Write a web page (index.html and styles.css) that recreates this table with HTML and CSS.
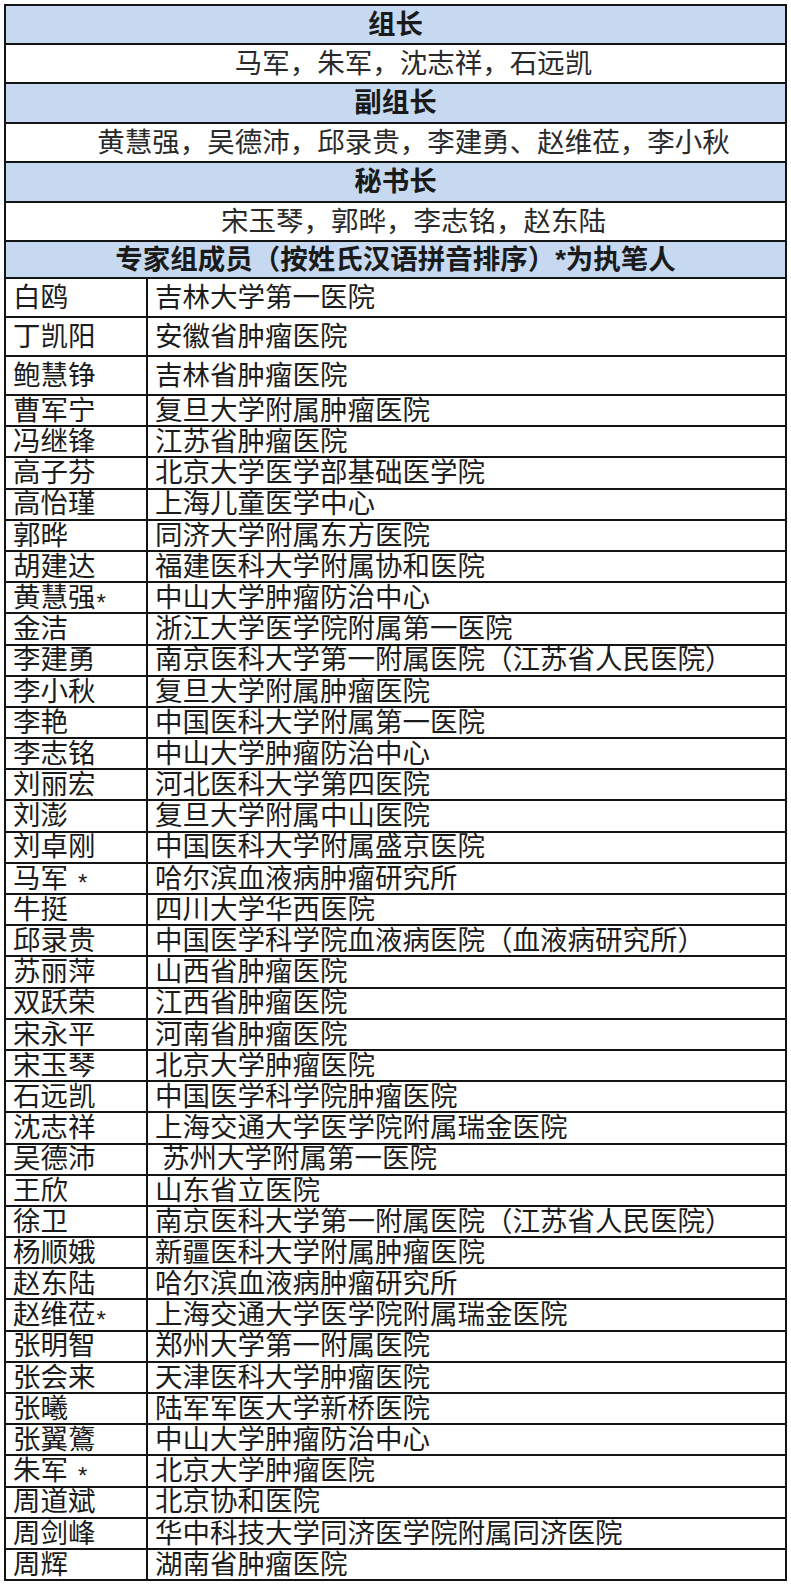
FILE: index.html
```html
<!DOCTYPE html>
<html lang="zh-CN">
<head>
<meta charset="utf-8">
<title>专家组</title>
<link rel="stylesheet" href="styles.css">
</head>
<body>
<div class="sheet">
  <div class="row head h1">组长</div>
  <div class="row names h2">马军，朱军，沈志祥，石远凯</div>
  <div class="row head h3">副组长</div>
  <div class="row names h4">黄慧强，吴德沛，邱录贵，李建勇、赵维莅，李小秋</div>
  <div class="row head h5">秘书长</div>
  <div class="row names h6">宋玉琴，郭晔，李志铭，赵东陆</div>
  <div class="row head h7">专家组成员（按姓氏汉语拼音排序）*为执笔人</div>
  <div class="row member tall"><div class="c1">白鸥</div><div class="c2">吉林大学第一医院</div></div>
  <div class="row member tall"><div class="c1">丁凯阳</div><div class="c2">安徽省肿瘤医院</div></div>
  <div class="row member tall"><div class="c1">鲍慧铮</div><div class="c2">吉林省肿瘤医院</div></div>
  <div class="row member"><div class="c1">曹军宁</div><div class="c2">复旦大学附属肿瘤医院</div></div>
  <div class="row member"><div class="c1">冯继锋</div><div class="c2">江苏省肿瘤医院</div></div>
  <div class="row member"><div class="c1">高子芬</div><div class="c2">北京大学医学部基础医学院</div></div>
  <div class="row member"><div class="c1">高怡瑾</div><div class="c2">上海儿童医学中心</div></div>
  <div class="row member"><div class="c1">郭晔</div><div class="c2">同济大学附属东方医院</div></div>
  <div class="row member"><div class="c1">胡建达</div><div class="c2">福建医科大学附属协和医院</div></div>
  <div class="row member"><div class="c1">黄慧强<span class="ast">*</span></div><div class="c2">中山大学肿瘤防治中心</div></div>
  <div class="row member"><div class="c1">金洁</div><div class="c2">浙江大学医学院附属第一医院</div></div>
  <div class="row member"><div class="c1">李建勇</div><div class="c2">南京医科大学第一附属医院（江苏省人民医院）</div></div>
  <div class="row member"><div class="c1">李小秋</div><div class="c2">复旦大学附属肿瘤医院</div></div>
  <div class="row member"><div class="c1">李艳</div><div class="c2">中国医科大学附属第一医院</div></div>
  <div class="row member"><div class="c1">李志铭</div><div class="c2">中山大学肿瘤防治中心</div></div>
  <div class="row member"><div class="c1">刘丽宏</div><div class="c2">河北医科大学第四医院</div></div>
  <div class="row member"><div class="c1">刘澎</div><div class="c2">复旦大学附属中山医院</div></div>
  <div class="row member"><div class="c1">刘卓刚</div><div class="c2">中国医科大学附属盛京医院</div></div>
  <div class="row member"><div class="c1">马军<span class="ast spaced">*</span></div><div class="c2">哈尔滨血液病肿瘤研究所</div></div>
  <div class="row member"><div class="c1">牛挺</div><div class="c2">四川大学华西医院</div></div>
  <div class="row member"><div class="c1">邱录贵</div><div class="c2">中国医学科学院血液病医院（血液病研究所）</div></div>
  <div class="row member"><div class="c1">苏丽萍</div><div class="c2">山西省肿瘤医院</div></div>
  <div class="row member"><div class="c1">双跃荣</div><div class="c2">江西省肿瘤医院</div></div>
  <div class="row member"><div class="c1">宋永平</div><div class="c2">河南省肿瘤医院</div></div>
  <div class="row member"><div class="c1">宋玉琴</div><div class="c2">北京大学肿瘤医院</div></div>
  <div class="row member"><div class="c1">石远凯</div><div class="c2">中国医学科学院肿瘤医院</div></div>
  <div class="row member"><div class="c1">沈志祥</div><div class="c2">上海交通大学医学院附属瑞金医院</div></div>
  <div class="row member"><div class="c1">吴德沛</div><div class="c2 lead">苏州大学附属第一医院</div></div>
  <div class="row member"><div class="c1">王欣</div><div class="c2">山东省立医院</div></div>
  <div class="row member"><div class="c1">徐卫</div><div class="c2">南京医科大学第一附属医院（江苏省人民医院）</div></div>
  <div class="row member"><div class="c1">杨顺娥</div><div class="c2">新疆医科大学附属肿瘤医院</div></div>
  <div class="row member"><div class="c1">赵东陆</div><div class="c2">哈尔滨血液病肿瘤研究所</div></div>
  <div class="row member"><div class="c1">赵维莅<span class="ast">*</span></div><div class="c2">上海交通大学医学院附属瑞金医院</div></div>
  <div class="row member"><div class="c1">张明智</div><div class="c2">郑州大学第一附属医院</div></div>
  <div class="row member"><div class="c1">张会来</div><div class="c2">天津医科大学肿瘤医院</div></div>
  <div class="row member"><div class="c1">张曦</div><div class="c2">陆军军医大学新桥医院</div></div>
  <div class="row member"><div class="c1">张翼鷟</div><div class="c2">中山大学肿瘤防治中心</div></div>
  <div class="row member"><div class="c1">朱军<span class="ast spaced">*</span></div><div class="c2">北京大学肿瘤医院</div></div>
  <div class="row member"><div class="c1">周道斌</div><div class="c2">北京协和医院</div></div>
  <div class="row member"><div class="c1">周剑峰</div><div class="c2">华中科技大学同济医学院附属同济医院</div></div>
  <div class="row member"><div class="c1">周辉</div><div class="c2">湖南省肿瘤医院</div></div>
</div>
</body>
</html>
```

FILE: styles.css
```css
html, body {
  margin: 0;
  padding: 0;
  background: #ffffff;
}

body {
  font-family: "Liberation Sans", "Noto Sans CJK SC", sans-serif;
  color: #1c1c1c;
}

.sheet {
  margin: 4px 0 0 4px;
  width: 783px;
  box-sizing: border-box;
  border: 2px solid #141414;
  border-bottom: none;
}

.row {
  box-sizing: border-box;
  border-bottom: 2px solid #141414;
  display: flex;
  align-items: center;
  font-size: 27.5px;
  line-height: 1;
  white-space: nowrap;
}

.head {
  justify-content: center;
  background: #c6d9f0;
  font-weight: 700;
  font-size: 27.5px;
  color: #1a1a1a;
}

.names {
  justify-content: center;
  padding-left: 36px;
  color: #2a2a2a;
}

.h1 { height: 39px; }
.h2 { height: 39px; }
.h3 { height: 40px; }
.h4 { height: 39px; }
.h5 { height: 40px; }
.h6 { height: 39px; }
.h7 { height: 37px; }

.member {
  height: 31.2px;
  align-items: stretch;
}

.member.tall {
  height: 39px;
}

.c1 {
  width: 142px;
  flex: none;
  box-sizing: border-box;
  border-right: 2px solid #141414;
  padding-left: 7px;
  display: flex;
  align-items: center;
}

.c2 {
  flex: 1;
  padding-left: 7px;
  display: flex;
  align-items: center;
}

.c2.lead {
  padding-left: 14px;
}

.ast {
  font-size: 24px;
  margin-left: 1px;
  position: relative;
  top: 5px;
}

.ast.spaced {
  margin-left: 10px;
}
```
